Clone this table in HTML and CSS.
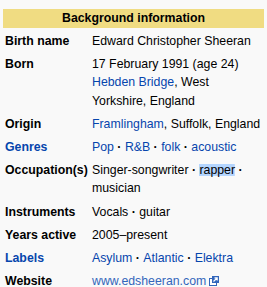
FILE: index.html
```html
<!DOCTYPE html>
<html>
<head>
<meta charset="utf-8">
<link rel="stylesheet" href="styles.css">
</head>
<body>
<div class="infobox">
  <div class="caption"><span>Sheeran performing in Sydney, Australia, 2015</span></div>
  <div class="header">Background information</div>

  <div class="label">Birth name</div>
  <div class="value">Edward Christopher Sheeran</div>

  <div class="label">Born</div>
  <div class="value">17 February 1991 (age 24)<br><a class="link" href="#">Hebden Bridge</a>, West Yorkshire, England</div>

  <div class="label">Origin</div>
  <div class="value"><a class="link" href="#">Framlingham</a>, Suffolk, England</div>

  <div class="label"><a class="link" href="#">Genres</a></div>
  <div class="value"><a class="link" href="#">Pop</a><b class="sep"> · </b><a class="link" href="#">R&amp;B</a><b class="sep"> · </b><a class="link" href="#">folk</a><b class="sep"> · </b><a class="link" href="#">acoustic</a></div>

  <div class="label">Occupation(s)</div>
  <div class="value">Singer-songwriter<b class="sep"> · </b><span class="selected">rapper</span><b class="sep"> · </b>musician</div>

  <div class="label">Instruments</div>
  <div class="value">Vocals<b class="sep"> · </b>guitar</div>

  <div class="label">Years active</div>
  <div class="value">2005–present</div>

  <div class="label"><a class="link" href="#">Labels</a></div>
  <div class="value"><a class="link" href="#">Asylum</a><b class="sep"> · </b><a class="link" href="#">Atlantic</a><b class="sep"> · </b><a class="link" href="#">Elektra</a></div>

  <div class="label">Website</div>
  <div class="value"><a class="extlink" href="#">www.edsheeran.com</a><svg class="exticon" width="10" height="10" viewBox="0 0 10 10"><rect x="0.5" y="2.5" width="7" height="7" fill="#fff" stroke="#36b" stroke-width="1"/><rect x="3" y="0" width="7" height="7" fill="#36b"/><path d="M4.5 5.5 L8 2 M5.5 1.8 H8.2 V4.5" fill="none" stroke="#fff" stroke-width="1.2"/></svg></div>
</div>
</body>
</html>
```

FILE: styles.css
```css
html, body {
  margin: 0;
  padding: 0;
  background: #f9f9f9;
}

.infobox {
  width: 267px;
  display: grid;
  grid-template-columns: 84px 1fr;
  column-gap: 3px;
  row-gap: 3px;
  padding: 0 3px;
  box-sizing: border-box;
  font-family: "Liberation Sans", Arial, Helvetica, sans-serif;
  font-size: 12.32px;
  line-height: 18.2px;
  color: #000;
}

.caption {
  grid-column: 1 / 3;
  height: 6px;
  overflow: hidden;
  display: flex;
  align-items: flex-end;
  justify-content: center;
  font-size: 11px;
  line-height: 14px;
  color: #777;
}

.caption span {
  margin-bottom: 7px;
  white-space: nowrap;
}

.header {
  grid-column: 1 / 3;
  background: #f0dc82;
  text-align: center;
  font-weight: bold;
  line-height: 19px;
  height: 19px;
}

.label {
  font-weight: bold;
  padding: 1px 2px;
  white-space: nowrap;
}

.value {
  padding: 1px 2px;
}

.link {
  color: #0645ad;
  text-decoration: none;
}

.extlink {
  color: #3366bb;
  text-decoration: none;
}

.exticon {
  margin-left: 3px;
  vertical-align: -1px;
}

.sep {
  font-weight: bold;
}

.selected {
  background: linear-gradient(#b4d5fe, #b4d5fe) no-repeat center / 100% 12px;
}
```
